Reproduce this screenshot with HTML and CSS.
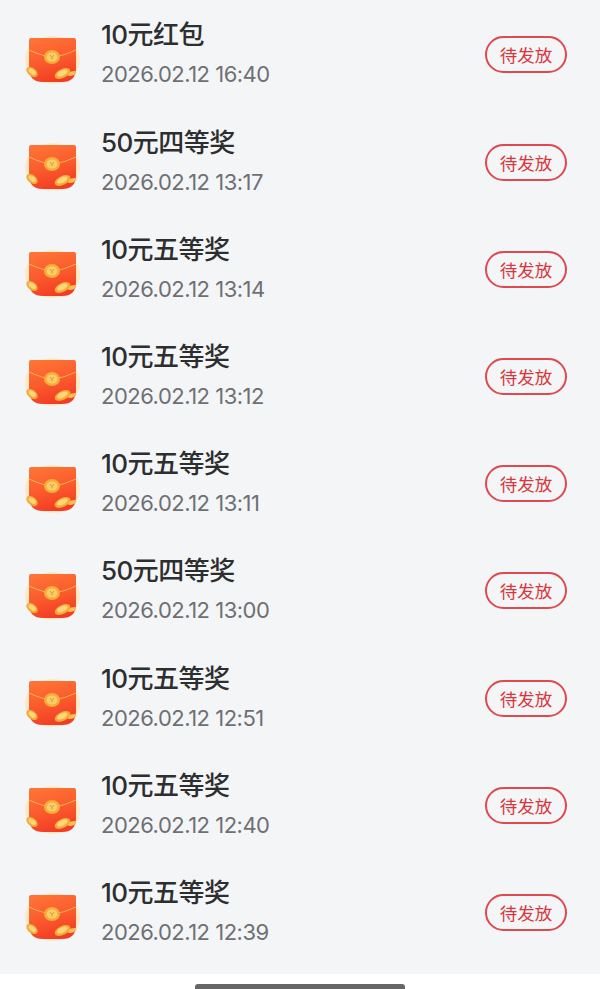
FILE: index.html
```html
<!DOCTYPE html>
<html lang="zh-CN">
<head>
<meta charset="utf-8">
<title>奖品记录</title>
<link rel="stylesheet" href="styles.css">
</head>
<body>
<svg class="defs" width="0" height="0" aria-hidden="true">
  <defs>
    <linearGradient id="env" x1="0.2" y1="0" x2="0.5" y2="1">
      <stop offset="0" stop-color="#ff7436"/>
      <stop offset="0.55" stop-color="#fa5a2c"/>
      <stop offset="1" stop-color="#f23c25"/>
    </linearGradient>
    <symbol id="packet" viewBox="0 0 58 58">
      <ellipse cx="28.500" cy="34" rx="27.500" ry="24" fill="#fde9c6"/>
      <path d="M5 14q0-2 2-2h43q2 0 2 2V42q0 14-14 14H19Q5 56 5 42Z" fill="url(#env)"/>
      <path d="M5 24Q18 30 28 31Q40 30 52 24" fill="none" stroke="#f9b860" stroke-width="0.900"/>
      <ellipse cx="28" cy="31" rx="8" ry="7" fill="#f4ad3a"/>
      <ellipse cx="28" cy="31" rx="5.500" ry="4.600" fill="#fbcd68"/>
      <path d="M26 29l2 2.500 2-2.500M28 31.500v2" fill="none" stroke="#d98a2a" stroke-width="0.800"/>
      <g transform="rotate(38 8 46)">
        <ellipse cx="8" cy="46" rx="6.500" ry="4" fill="#f4ab38"/>
        <ellipse cx="8" cy="45.500" rx="4.300" ry="2.300" fill="#fdd67c"/>
      </g>
      <ellipse cx="48" cy="47.500" rx="4.500" ry="2" transform="rotate(-20 48 47.500)" fill="#f8c052"/>
      <g transform="rotate(-25 38.500 47.500)">
        <ellipse cx="38.500" cy="47.500" rx="8.500" ry="4.500" fill="#f4ab38"/>
        <ellipse cx="38.500" cy="47" rx="5.800" ry="2.700" fill="#fdd67c"/>
      </g>
    </symbol>
  </defs>
</svg>
<main class="page">
  <ul class="list">
    <li class="row"><svg class="icon"><use href="#packet"/></svg><div class="info"><div class="title">10元红包</div><div class="time">2026.02.12 16:40</div></div><span class="status">待发放</span></li>
    <li class="row"><svg class="icon"><use href="#packet"/></svg><div class="info"><div class="title">50元四等奖</div><div class="time">2026.02.12 13:17</div></div><span class="status">待发放</span></li>
    <li class="row"><svg class="icon"><use href="#packet"/></svg><div class="info"><div class="title">10元五等奖</div><div class="time">2026.02.12 13:14</div></div><span class="status">待发放</span></li>
    <li class="row"><svg class="icon"><use href="#packet"/></svg><div class="info"><div class="title">10元五等奖</div><div class="time">2026.02.12 13:12</div></div><span class="status">待发放</span></li>
    <li class="row"><svg class="icon"><use href="#packet"/></svg><div class="info"><div class="title">10元五等奖</div><div class="time">2026.02.12 13:11</div></div><span class="status">待发放</span></li>
    <li class="row"><svg class="icon"><use href="#packet"/></svg><div class="info"><div class="title">50元四等奖</div><div class="time">2026.02.12 13:00</div></div><span class="status">待发放</span></li>
    <li class="row"><svg class="icon"><use href="#packet"/></svg><div class="info"><div class="title">10元五等奖</div><div class="time">2026.02.12 12:51</div></div><span class="status">待发放</span></li>
    <li class="row"><svg class="icon"><use href="#packet"/></svg><div class="info"><div class="title">10元五等奖</div><div class="time">2026.02.12 12:40</div></div><span class="status">待发放</span></li>
    <li class="row"><svg class="icon"><use href="#packet"/></svg><div class="info"><div class="title">10元五等奖</div><div class="time">2026.02.12 12:39</div></div><span class="status">待发放</span></li>
  </ul>
  <div class="home"><span class="home-bar"></span></div>
</main>
</body>
</html>
```
FILE: styles.css
```css
* { box-sizing: border-box; }
html, body { margin: 0; padding: 0; height: 100%; background: #fff; }
body { font-family: Inter, "Noto Sans CJK SC", "Noto Sans", sans-serif; overflow: hidden; }
.defs { position: absolute; }
.page { display: flex; flex-direction: column; height: 989px; }
.list { list-style: none; margin: 0; padding: 1.4px 0 8px; background: #f4f5f7; height: 974px; }
.row { display: flex; align-items: center; height: 107.2px; padding: 0 33px 0 24px; }
.icon { width: 58px; height: 58px; flex: none; }
.info { flex: 1; margin-left: 19px; display: flex; flex-direction: column; gap: 9px; }
.title { font-size: 26px; line-height: 30px; font-weight: 500; color: #2d2e30; letter-spacing: -0.5px; }
.time { font-size: 22px; line-height: 30px; color: #6e7074; font-weight: 400; letter-spacing: -0.5px; }
.status { display: flex; align-items: center; justify-content: center; width: 82px; height: 37px; border: 2px solid #de4a50; border-radius: 19px; color: #d9353c; font-size: 17.5px; }
.home { flex: 1; display: flex; justify-content: center; align-items: flex-end; }
.home-bar { width: 210px; height: 5px; background: #666; border-radius: 3px 3px 0 0; }
```
